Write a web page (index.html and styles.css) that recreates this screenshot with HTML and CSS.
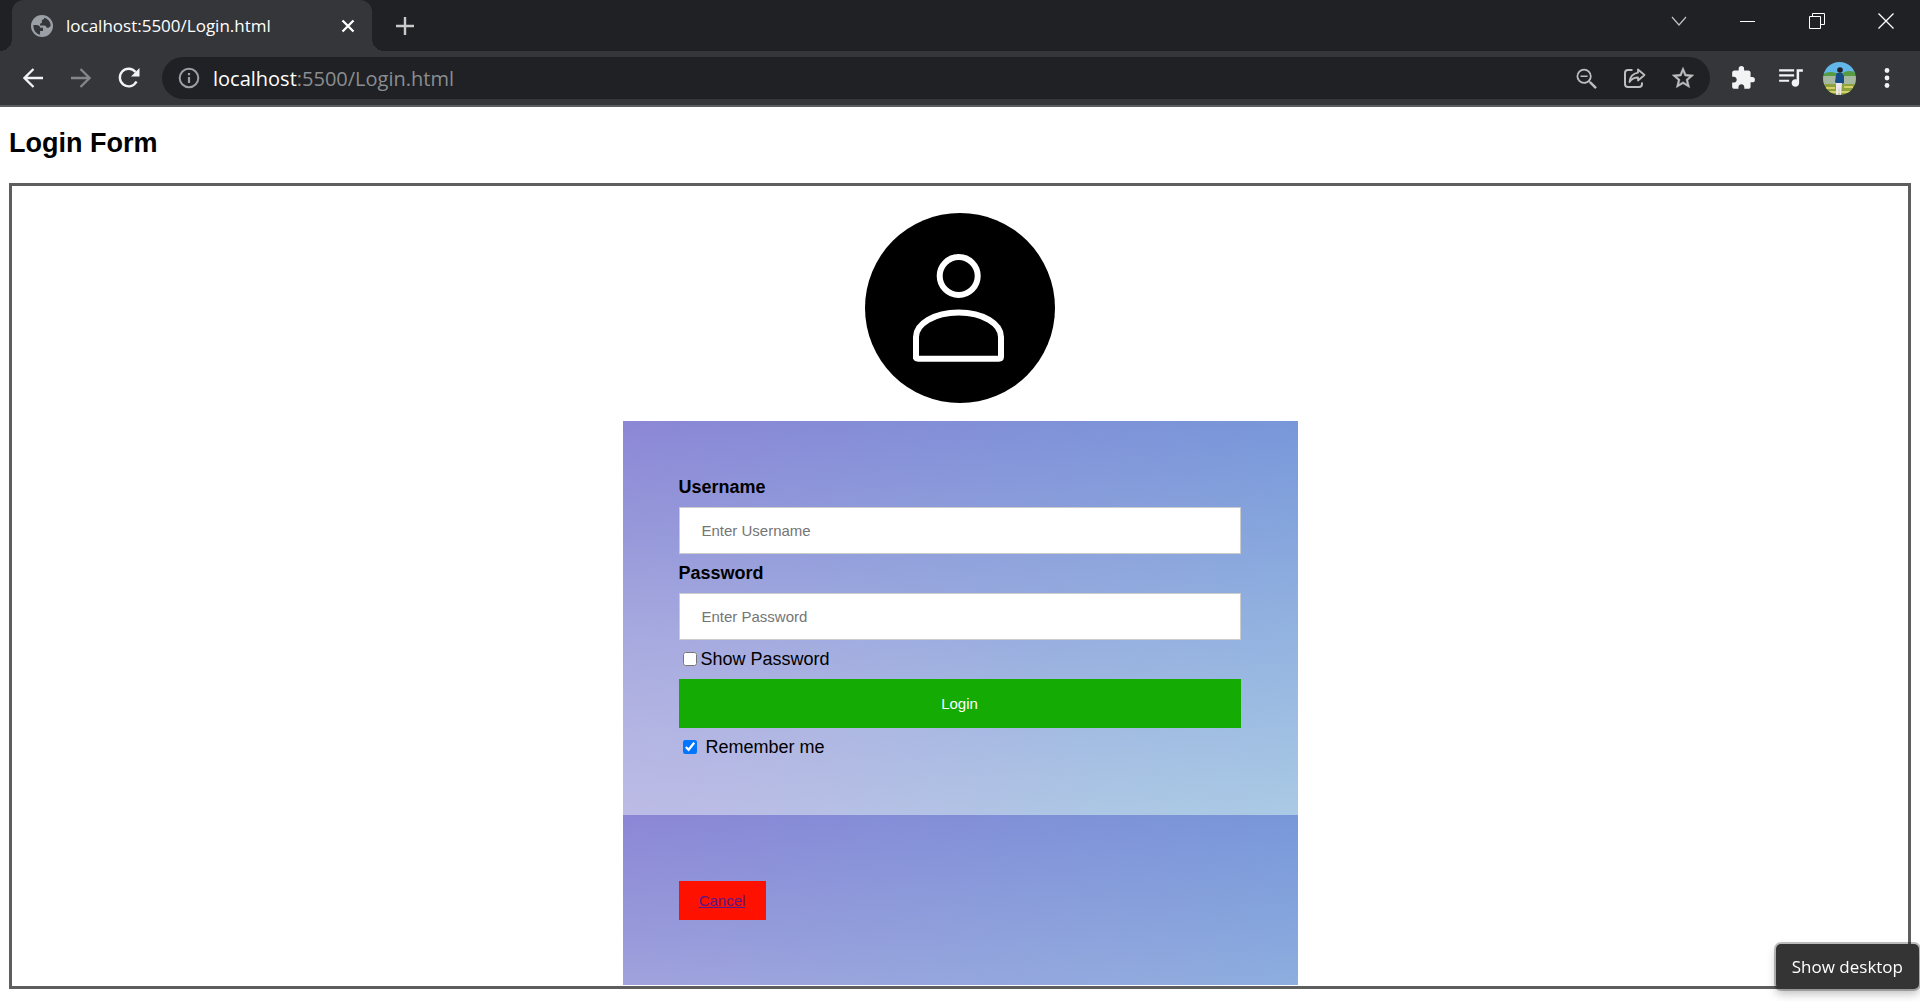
FILE: index.html
```html
<!DOCTYPE html>
<html lang="en">
<head>
<meta charset="utf-8">
<title>localhost:5500/Login.html</title>
<link rel="stylesheet" href="styles.css">
</head>
<body>
<header class="browser">
  <div class="tabstrip">
    <div class="tab">
      <svg class="favicon" viewBox="0 0 24 24" aria-hidden="true"><circle cx="12" cy="12" r="12" fill="#9aa0a6"/><path fill="#35363a" d="M2.600 11h3.500c2.200 0 3.600 1 4 3h3v3.500h-3.200v4C6 21 2.300 17 2.600 11zM14.500 2.900c-.2 1.500-1 2.300-2.600 2.300v2.600c0 1-.8 1.600-2 1.600v2h4.500c1.700 0 2.600 1 2.600 2.600 2.400.2 3.500-.7 4.500-2.500-.1-4.100-2.900-7.500-7-8.600z"/></svg>
      <span class="tab-title">localhost:5500/Login.html</span>
      <button class="tab-close" aria-label="Close tab"><svg width="14" height="14" viewBox="0 0 14 14"><path d="M1.500 1.500l11 11M12.500 1.500l-11 11" stroke="#fff" stroke-width="2.300"/></svg></button>
    </div>
    <button class="new-tab" aria-label="New tab"><svg width="18" height="18" viewBox="0 0 18 18"><path d="M9 0v18M0 9h18" stroke="#c9cacc" stroke-width="2.400"/></svg></button>
    <div class="window-buttons">
      <button class="win" aria-label="Search tabs"><svg width="16" height="16" viewBox="0 0 16 16"><path d="M1 4l7 8 7-8" fill="none" stroke="#c0c1c3" stroke-width="1.200"/></svg></button>
      <button class="win" aria-label="Minimize"><svg width="16" height="16" viewBox="0 0 16 16"><path d="M0 8.500h15" stroke="#fff"/></svg></button>
      <button class="win" aria-label="Restore"><svg width="16" height="16" viewBox="0 0 16 16"><path d="M.5 3.500h11v12H.5zM3.500 3.500v-3h12v11h-4" fill="none" stroke="#fff"/></svg></button>
      <button class="win" aria-label="Close"><svg width="16" height="16" viewBox="0 0 16 16"><path d="M.5 .5l15 15M15.500.5l-15 15" stroke="#fff" stroke-width="1.300"/></svg></button>
    </div>
  </div>
  <nav class="toolbar">
    <button class="tool" aria-label="Back"><svg width="20" height="20" viewBox="0 0 20 20"><path d="M20 10H2M10.500 1l-9 9 9 9" fill="none" stroke="#f1f3f4" stroke-width="2.300"/></svg></button>
    <button class="tool" aria-label="Forward"><svg width="20" height="20" viewBox="0 0 20 20"><path d="M0 10h18M9.500 1l9 9-9 9" fill="none" stroke="#85868a" stroke-width="2.300"/></svg></button>
    <button class="tool" aria-label="Reload"><svg width="22" height="22" viewBox="0 0 22 22"><path d="M18.500 14.500A8.800 8.800 0 1 1 17.500 5" fill="none" stroke="#f1f3f4" stroke-width="2.400"/><path d="M21.500 1v8.500H13z" fill="#f1f3f4"/></svg></button>
    <div class="omnibox">
      <svg class="info" viewBox="0 0 24 24" aria-hidden="true"><circle cx="12" cy="12" r="9.300" fill="none" stroke="#9aa0a6" stroke-width="2"/><path d="M12 11v6M12 7v2.200" stroke="#9aa0a6" stroke-width="2.200"/></svg>
      <span class="url"><span class="host">localhost</span>:5500/Login.html</span>
      <button class="tool" aria-label="Zoom"><svg width="28" height="28" viewBox="0 0 24 24"><path fill="#bdbebf" d="M15.500 14h-.79l-.28-.27A6.471 6.471 0 0 0 16 9.500 6.500 6.500 0 1 0 9.500 16c1.610 0 3.090-.59 4.230-1.570l.27.28v.79l5 4.990L20.490 19l-4.990-5zm-6 0.500a5 5 0 1 1 0-10 5 5 0 0 1 0 10zM6.500 8.800h6v1.400h-6z" transform="translate(0 1)"/></svg></button>
      <button class="tool" aria-label="Share"><svg width="22" height="20" viewBox="0 0 22 20"><path d="M8.500 2H4a3 3 0 0 0-3 3v11a3 3 0 0 0 3 3h11a3 3 0 0 0 3-3v-1.500" fill="none" stroke="#bdbebf" stroke-width="2"/><path d="M14 1.500l6.500 5.500-6.500 5.500V9.500c-4 0-6.500 1.300-8.500 4.500.5-5 3.500-8.500 8.500-9.300z" fill="none" stroke="#bdbebf" stroke-width="1.800" stroke-linejoin="round"/></svg></button>
      <button class="tool" aria-label="Bookmark"><svg width="26" height="26" viewBox="0 0 24 24"><path fill="#bdbebf" stroke="#bdbebf" stroke-width=".4" d="M22 9.240l-7.190-.62L12 2 9.190 8.630 2 9.240l5.460 4.730L5.820 21 12 17.270 18.180 21l-1.630-7.030L22 9.240zM12 15.400l-3.760 2.270 1-4.280-3.320-2.880 4.380-.38L12 6.100l1.710 4.040 4.380.38-3.320 2.880 1 4.280L12 15.400z"/></svg></button>
    </div>
    <button class="tool" aria-label="Extensions"><svg width="26" height="26" viewBox="0 0 24 24"><path fill="#f1f3f4" d="M20.500 11H19V7c0-1.100-.9-2-2-2h-4V3.500a2.500 2.500 0 0 0-5 0V5H4c-1.100 0-1.990.9-1.990 2v3.800H3.500c1.490 0 2.700 1.210 2.700 2.700s-1.210 2.700-2.700 2.700H2V20c0 1.100.9 2 2 2h3.800v-1.500c0-1.490 1.210-2.700 2.700-2.700s2.700 1.210 2.700 2.700V22H17c1.100 0 2-.9 2-2v-4h1.500a2.500 2.500 0 0 0 0-5z"/></svg></button>
    <button class="tool" aria-label="Media controls"><svg width="30" height="30" viewBox="0 0 24 24"><path fill="#f1f3f4" d="M15 4H3v1.700h12V4zm0 4H3v1.700h12V8zM3 14h8v-1.700H3V14zM17 4v8.180c-.31-.11-.65-.18-1-.18-1.660 0-3 1.340-3 3s1.340 3 3 3 3-1.340 3-3V6h3V4h-5z" transform="translate(-.5 1)"/></svg></button>
    <button class="tool" aria-label="Profile">
      <svg width="33" height="33" viewBox="0 0 33 33">
        <defs><clipPath id="round"><circle cx="16.500" cy="16.500" r="16.500"/></clipPath></defs>
        <g clip-path="url(#round)">
          <path fill="#62b7e8" d="M0 0h33v12H0z"/>
          <path fill="#579c43" d="M0 12c4-2 8-3 13-1h7c5-3 10-2 13 0v4H0z"/>
          <path fill="#a6b9a0" d="M0 14h33v9H0z"/>
          <path fill="#8ba33a" d="M0 22h33v11H0z"/>
          <path fill="#d5cf67" d="M3 25h9v2H3zM21 24h9v2h-9zM5 29h22v2H5z"/>
          <path fill="#174b88" d="M14 11h5l2 3v7l-2 1h-5l-2-2 1-7z"/>
          <path fill="#eee8ee" d="M13 21h6l-1 12h-1.500l-.5-8-.5 8H13z"/>
          <circle cx="17" cy="8" r="2.800" fill="#251f28"/>
        </g>
      </svg>
    </button>
    <button class="tool" aria-label="Menu"><svg width="6" height="20" viewBox="0 0 6 20"><g fill="#f1f3f4"><circle cx="3" cy="2.500" r="2.400"/><circle cx="3" cy="10" r="2.400"/><circle cx="3" cy="17.500" r="2.400"/></g></svg></button>
  </nav>
</header>

<main class="page">
  <h2 class="title">Login Form</h2>
  <form class="frame">
    <svg class="avatar" viewBox="0 0 190 190" role="img" aria-label="User avatar">
      <circle cx="95" cy="95" r="95"/>
      <g fill="none" stroke="#fff" stroke-width="6">
        <circle cx="93.700" cy="63" r="19"/>
        <path d="M51 146V124c0-13 18-24.500 42.700-24.500S136 111 136 124v19.500q0 2.200-2.200 2.200H53.200q-2.200 0-2.200-2.200z"/>
      </g>
    </svg>
    <div class="panel fields">
      <label class="label" for="username">Username</label>
      <input class="field" id="username" type="text" placeholder="Enter Username">
      <label class="label" for="password">Password</label>
      <input class="field" id="password" type="password" placeholder="Enter Password">
      <label class="check"><input type="checkbox">Show Password</label>
      <button class="login" type="submit">Login</button>
      <label class="check remember"><input type="checkbox" checked>Remember me</label>
    </div>
    <div class="panel actions">
      <div class="cancel"><a href="#">Cancel</a></div>
    </div>
  </form>
</main>
<div class="tooltip" role="tooltip">Show desktop</div>
</body>
</html>
```
FILE: styles.css
```css
* { box-sizing: border-box; }
body {
  margin: 0;
  background: #fff;
  color: #000;
  font-family: "Liberation Sans", Arial, sans-serif;
  font-size: 18px;
}
button {
  border: 0;
  padding: 0;
  background: none;
  font-family: inherit;
}
svg { display: block; }

/* Browser chrome */
.browser {
  background: #35363a;
  border-bottom: 2px solid #5c5d61;
  font-family: "Open Sans", "Noto Sans", sans-serif;
}
.tabstrip {
  display: flex;
  height: 51px;
  padding-left: 12px;
  background: #202124;
}
.tab {
  position: relative;
  display: flex;
  align-items: center;
  width: 360px;
  padding: 0 12px 0 19px;
  border-radius: 12px 12px 0 0;
  background: #35363a;
}
.tab::before,
.tab::after {
  content: "";
  position: absolute;
  bottom: 0;
  width: 12px;
  height: 12px;
}
.tab::before {
  right: 100%;
  background: radial-gradient(circle at 0 0, #202124 12px, #35363a 12px);
}
.tab::after {
  left: 100%;
  background: radial-gradient(circle at 100% 0, #202124 12px, #35363a 12px);
}
.favicon { width: 22px; height: 22px; }
.tab-title {
  flex: 1;
  margin-left: 13px;
  color: #fff;
  font-size: 17px;
  white-space: nowrap;
}
.tab-close {
  display: grid;
  place-items: center;
  width: 24px;
  height: 24px;
}
.new-tab {
  display: grid;
  place-items: center;
  width: 42px;
  margin-left: 12px;
}
.window-buttons {
  display: flex;
  height: 42px;
  margin-left: auto;
}
.win {
  display: grid;
  place-items: center;
  width: 69px;
}
.toolbar {
  display: flex;
  align-items: center;
  height: 54px;
  padding: 0 9px;
}
.tool {
  display: grid;
  place-items: center;
  flex: none;
  width: 48px;
  height: 42px;
}
.omnibox {
  display: flex;
  align-items: center;
  flex: 1;
  height: 42px;
  margin: 0 9px;
  padding: 0 3px 0 15px;
  border-radius: 21px;
  background: #202124;
}
.info { width: 24px; height: 24px; }
.url {
  flex: 1;
  margin-left: 12px;
  color: #8b8d91;
  font-size: 20px;
}
.host { color: #fff; }

/* Login page */
.page { padding: 21px 9px 12px; }
.title {
  margin: 0 0 25px;
  font-size: 27px;
  line-height: 30px;
}
.frame {
  display: flex;
  flex-direction: column;
  align-items: center;
  padding: 27px 0 1px;
  border: 3px solid #5e5e5e;
}
.avatar {
  width: 190px;
  height: 190px;
  margin-bottom: 18px;
}
.panel {
  width: 100%;
  max-width: 675px;
  background:
    radial-gradient(ellipse at 5% 100%, rgba(200, 178, 232, 0.4), rgba(200, 178, 232, 0) 50%),
    linear-gradient(rgba(221, 250, 240, 0), rgba(221, 250, 240, 0.5)),
    linear-gradient(100deg, #8c87d6, #7699da);
  background-size: 100% 394px;
}
.fields {
  display: flex;
  flex-direction: column;
  gap: 9px;
  padding: 56px 57px 57px 56px;
}
.label {
  font-weight: bold;
  line-height: 21px;
}
.field {
  height: 47px;
  padding: 0 22px;
  border: 1px solid #ccc;
  background: #fff;
  font-family: inherit;
  font-size: 15px;
}
.check {
  display: flex;
  align-items: flex-start;
  gap: 4px;
  line-height: 21px;
}
.check input {
  width: 14px;
  height: 14px;
  margin: 3px 0 0 4px;
}
.remember { gap: 9px; }
.login {
  height: 49px;
  background: #14ab05;
  color: #fff;
  font-size: 15px;
}
.actions { padding: 66px 56px 65px; }
.cancel {
  width: 87px;
  background: #f10;
  font-size: 15px;
  line-height: 39px;
  text-align: center;
}
.cancel a { color: #551a8b; }

.tooltip {
  position: fixed;
  right: 1px;
  bottom: 12px;
  padding: 0 16px;
  border-radius: 5px;
  background: #343434;
  box-shadow: 0 0 0 2px rgba(0, 0, 0, 0.25), 0 5px 10px rgba(0, 0, 0, 0.25);
  color: #fff;
  font-family: "Open Sans", "Noto Sans", sans-serif;
  font-size: 17px;
  line-height: 45px;
}
```
